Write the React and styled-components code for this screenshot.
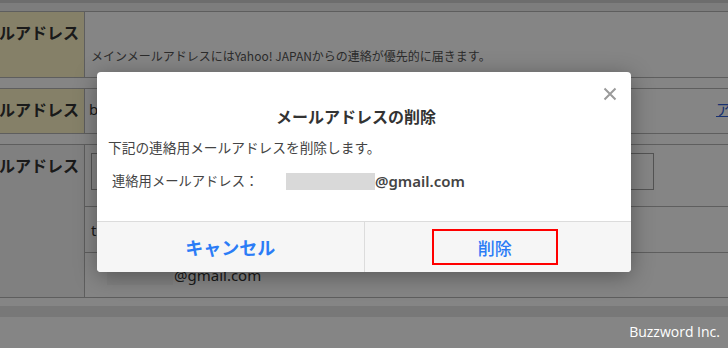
import React from "react";
import styled, { createGlobalStyle } from "styled-components";

const GlobalStyle = createGlobalStyle`
  body {
    margin: 0;
    font-family: "Noto Sans CJK JP", "Noto Sans", sans-serif;
    color: #333;
  }
`;

const App = () => {
  return (
    <>
      <GlobalStyle />
      <Page>
        <TopBar />
        <Section>
          <Label highlight>メインメールアドレス</Label>
          <Cell>
            <Note>メインメールアドレスにはYahoo! JAPANからの連絡が優先的に届きます。</Note>
          </Cell>
        </Section>
        <Section>
          <Label highlight>予備メールアドレス</Label>
          <Cell row>
            <Value>b</Value>
            <Link>アドレス変更</Link>
          </Cell>
        </Section>
        <Section>
          <Label>連絡用メールアドレス</Label>
          <Cell>
            <SubRow h={61}>
              <Input />
            </SubRow>
            <SubRow h={46} line>
              <Value>t</Value>
            </SubRow>
            <SubRow h={45} line>
              <Redacted />
              <Value>@gmail.com</Value>
            </SubRow>
          </Cell>
        </Section>
        <Band />
        <Footer />

        <Overlay>
          <Modal>
            <Close aria-label="閉じる">
              <svg width="14" height="14" viewBox="0 0 14 14">
                <path d="M1.5 1.5 L12.5 12.5 M12.5 1.5 L1.5 12.5" stroke="#9a9a9a" strokeWidth="2" />
              </svg>
            </Close>
            <Title>メールアドレスの削除</Title>
            <Body>
              <Text>下記の連絡用メールアドレスを削除します。</Text>
              <EmailRow>
                <EmailLabel>連絡用メールアドレス：</EmailLabel>
                <Mask />
                <Email>@gmail.com</Email>
              </EmailRow>
            </Body>
            <Actions>
              <Action bold>キャンセル</Action>
              <Action divider>
                <Marked>削除</Marked>
              </Action>
            </Actions>
          </Modal>
        </Overlay>
        <Watermark>Buzzword Inc.</Watermark>
      </Page>
    </>
  );
};

const Page = styled.div`
  position: relative;
  width: 728px;
  height: 348px;
  overflow: hidden;
  background: #fff;
`;

const TopBar = styled.div`
  box-sizing: border-box;
  height: 11px;
  background: #f0f0f0;
  border-top: 3px solid #d2d2d2;
`;

const Section = styled.div`
  display: grid;
  grid-template-columns: 85px 1fr;
  border-top: 1px solid #b4b4b4;
  border-bottom: 1px solid #b4b4b4;
  & + & {
    margin-top: 10px;
  }
`;

const Label = styled.div`
  display: flex;
  justify-content: flex-end;
  overflow: hidden;
  white-space: nowrap;
  padding: 8px 5px 0 0;
  line-height: 24px;
  font-size: 16px;
  font-weight: 700;
  color: #333;
  background: ${(p) => (p.highlight ? "#fff6c8" : "#f6f6f6")};
  border-right: 1px solid #b4b4b4;
`;

const Cell = styled.div`
  display: flex;
  flex-direction: ${(p) => (p.row ? "row" : "column")};
  justify-content: ${(p) => (p.row ? "space-between" : "flex-start")};
  padding: ${(p) => (p.row ? "10px 0 14px 4px" : "0")};
  min-height: ${(p) => (p.row ? "20px" : "65px")};
  white-space: nowrap;
`;

const Note = styled.div`
  padding: 35px 6px 0;
  font-size: 12px;
  line-height: 18px;
  color: #555;
`;

const Value = styled.span`
  font-size: 15px;
  line-height: 20px;
  color: #333;
  font-family: "Noto Sans", "Noto Sans CJK JP", sans-serif;
`;

const Link = styled.a`
  font-size: 15px;
  line-height: 20px;
  color: #2f5fd8;
  text-decoration: underline;
  margin-right: -78px;
`;

const SubRow = styled.div`
  display: flex;
  align-items: center;
  box-sizing: border-box;
  height: ${(p) => p.h}px;
  padding-left: 6px;
  border-top: ${(p) => (p.line ? "1px solid #b4b4b4" : "none")};
`;

const Input = styled.div`
  box-sizing: border-box;
  width: 563px;
  height: 37px;
  border: 1px solid #a0a0a0;
  background: #fff;
  margin-bottom: 8px;
`;

const Redacted = styled.span`
  width: 66px;
  height: 20px;
  margin: 0 1px 0 16px;
  background: #f7f7f7;
`;

const Band = styled.div`
  height: 11px;
  margin-top: 8px;
  background: #e6e6e6;
`;

const Footer = styled.div`
  height: 30px;
  background: #fff;
`;

const Overlay = styled.div`
  position: absolute;
  inset: 0;
  display: flex;
  align-items: flex-start;
  justify-content: center;
  padding-top: 72px;
  background: rgba(0, 0, 0, 0.48);
`;

const Modal = styled.div`
  position: relative;
  display: flex;
  flex-direction: column;
  width: 534px;
  height: 200px;
  background: #fff;
  border-radius: 4px;
  overflow: hidden;
  box-shadow: 0 4px 22px rgba(0, 0, 0, 0.35);
`;

const Close = styled.button`
  position: absolute;
  top: 15px;
  right: 14px;
  padding: 0;
  border: none;
  background: none;
  display: flex;
`;

const Title = styled.h2`
  margin: 0;
  padding: 32px 32px 0 16px;
  text-align: center;
  font-size: 16px;
  line-height: 24px;
  font-weight: 700;
  color: #333;
`;

const Body = styled.div`
  flex: 1;
  padding: 9px 0 0 11px;
  font-size: 13.7px;
  line-height: 20px;
  color: #444;
`;

const Text = styled.p`
  margin: 0;
`;

const EmailRow = styled.div`
  display: flex;
  align-items: center;
  margin-top: 14px;
  padding-left: 4px;
`;

const EmailLabel = styled.span`
  font-size: 13.3px;
  width: 174px;
`;

const Mask = styled.span`
  width: 89px;
  height: 17px;
  background: #d9d9d9;
`;

const Email = styled.span`
  font-size: 15px;
  font-weight: 600;
  color: #444;
  font-family: "Noto Sans", "Noto Sans CJK JP", sans-serif;
`;

const Actions = styled.div`
  display: flex;
  height: 50px;
  border-top: 1px solid #dcdcdc;
  background: #f6f6f6;
`;

const Action = styled.button`
  flex: 1;
  display: flex;
  align-items: center;
  justify-content: center;
  padding: 0;
  border: none;
  border-left: ${(p) => (p.divider ? "1px solid #dcdcdc" : "none")};
  background: none;
  font-family: inherit;
  font-size: ${(p) => (p.bold ? "18px" : "17px")};
  font-weight: ${(p) => (p.bold ? 700 : 500)};
  color: #2b7cf6;
`;

const Marked = styled.span`
  box-sizing: border-box;
  display: flex;
  align-items: center;
  justify-content: center;
  width: 126px;
  height: 36px;
  margin-right: 6px;
  border: 2px solid #ff0000;
`;

const Watermark = styled.div`
  position: absolute;
  right: 8px;
  bottom: 5px;
  font-family: "Open Sans", sans-serif;
  font-size: 14px;
  line-height: 22px;
  color: #fff;
`;

export default App;
